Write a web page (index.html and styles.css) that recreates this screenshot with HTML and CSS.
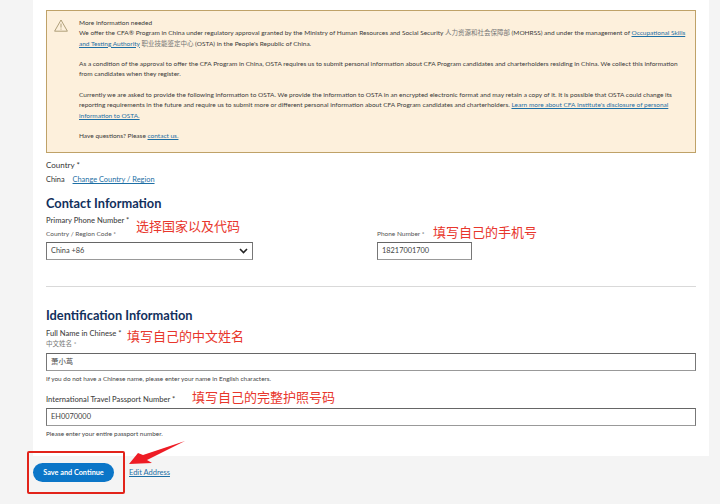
FILE: index.html
```html
<!DOCTYPE html>
<html lang="en">
<head>
  <meta charset="UTF-8">
  <meta name="viewport" content="width=device-width, initial-scale=1.0">
  <title>Contact Information</title>
  <link rel="stylesheet" href="styles.css">
</head>
<body>

  <div class="card">
    <div class="alert">
      <svg class="alert-icon" width="14" height="13" viewBox="0 0 14 13">
        <path d="M7 1 L13.4 12.2 H0.6 Z" fill="none" stroke="#9a8a60" stroke-width="0.8"/>
        <path d="M7 4.6 V8.6 M7 9.6 V10.6" fill="none" stroke="#9a8a60" stroke-width="0.8"/>
      </svg>
      <div class="alert-text">
        <p>More information needed<br>
        We offer the CFA® Program in China under regulatory approval granted by the Ministry of Human Resources and Social Security <span class="cn">人力资源和社会保障部</span> (MOHRSS) and under the management of <a href="#">Occupational Skills<br>and Testing Authority</a> <span class="cn">职业技能鉴定中心</span> (OSTA) in the People's Republic of China.</p>
        <p>As a condition of the approval to offer the CFA Program in China, OSTA requires us to submit personal information about CFA Program candidates and charterholders residing in China. We collect this information<br>from candidates when they register.</p>
        <p>Currently we are asked to provide the following information to OSTA. We provide the information to OSTA in an encrypted electronic format and may retain a copy of it. It is possible that OSTA could change its<br>reporting requirements in the future and require us to submit more or different personal information about CFA Program candidates and charterholders. <a href="#">Learn more about CFA Institute's disclosure of personal<br>information to OSTA.</a></p>
        <p>Have questions? Please <a href="#">contact us.</a></p>
      </div>
    </div>

    <div class="country">
      <div class="country-label">Country *</div>
      <div class="country-value">China <a href="#">Change Country / Region</a></div>
    </div>

    <h2 class="contact-title">Contact Information</h2>
    <div class="group-label">Primary Phone Number *</div>
    <div class="phone-row">
      <div class="code-field">
        <label class="small-label">Country / Region Code *</label>
        <div class="select-box">
          <span>China +86</span>
          <svg width="9" height="6" viewBox="0 0 9 6"><path d="M1 1 L4.5 4.5 L8 1" fill="none" stroke="#222" stroke-width="1.6"/></svg>
        </div>
      </div>
      <div class="phone-field">
        <label class="small-label">Phone Number *</label>
        <div class="text-box">18217001700</div>
      </div>
    </div>

    <hr class="divider">

    <h2 class="id-title">Identification Information</h2>
    <div class="group-label name-label">Full Name in Chinese *</div>
    <label class="small-label cn-label">中文姓名 *</label>
    <div class="text-box">萧小茑</div>
    <div class="hint">If you do not have a Chinese name, please enter your name in English characters.</div>
    <div class="group-label passport-label">International Travel Passport Number *</div>
    <div class="text-box">EH0070000</div>
    <div class="hint">Please enter your entire passport number.</div>
  </div>

  <div class="actions">
    <button class="save-btn">Save and Continue</button>
    <a class="edit-link" href="#">Edit Address</a>
  </div>

  <!-- red notes drawn over the page -->
  <span class="note note-code">选择国家以及代码</span>
  <span class="note note-phone">填写自己的手机号</span>
  <span class="note note-name">填写自己的中文姓名</span>
  <span class="note note-passport">填写自己的完整护照号码</span>
  <div class="red-box"></div>
  <svg class="red-arrow" width="62" height="30" viewBox="0 0 62 30">
    <path d="M60 1 L18 15 L13 13 L4 24 L27 23 L22 20 Z" fill="#ee1c25"/>
  </svg>

</body>
</html>
```

FILE: styles.css
```css
body {
  font-family: 'Lato', 'Noto Sans CJK SC', sans-serif;
  background-color: #f4f4f4;
  color: #333;
  margin: 0;
  height: 504px;
  overflow: hidden;
}

a {
  color: #1d6fa5;
}

.card {
  background-color: white;
  margin: 0 11px 0 33px;
  padding: 10px 13px 0;
  height: 446px;
}

.alert {
  display: flex;
  height: 143px;
  box-sizing: border-box;
  background-color: #fdf0dc;
  border: 1px solid #bfa268;
  padding: 7px 0 0 7px;
}

.alert-icon {
  flex: none;
  margin: 1px 11px 0 0;
}

.alert-text {
  font-size: 6.5px;
  line-height: 10.3px;
  color: #3a3a3a;
}

.alert-text .cn {
  font-size: 6.5px;
  color: #777;
}

.alert-text p {
  margin: 0 0 10.3px;
}

.country {
  margin-top: 7px;
  font-size: 7.4px;
}

.country-label {
  font-size: 8px;
  line-height: 10px;
}

.country-value {
  margin-top: 5px;
  line-height: 10px;
}

.country-value a {
  margin-left: 6px;
}

h2 {
  margin: 0;
  font-size: 12.8px;
  line-height: 16px;
  font-weight: 700;
  color: #12305c;
}

.contact-title {
  margin-top: 10px;
}

.group-label {
  font-size: 7.6px;
  line-height: 10px;
  font-weight: 500;
  color: #444;
  margin-top: 4px;
}

.phone-row {
  display: flex;
  margin-top: 4px;
}

.code-field {
  width: 207px;
  margin-right: 124px;
}

.phone-field {
  width: 95px;
}

.small-label {
  display: block;
  font-size: 6.5px;
  line-height: 9px;
  color: #555;
  margin-bottom: 4px;
}

.select-box, .text-box {
  box-sizing: border-box;
  height: 18px;
  border: 1px solid #777;
  border-top-color: #666;
  border-bottom-color: #999;
  padding: 0 4px;
  font-size: 7.4px;
  line-height: 16px;
  color: #444;
  background-color: white;
}

.select-box {
  display: flex;
  justify-content: space-between;
  align-items: center;
}

.divider {
  border: none;
  border-top: 1px solid #d9d9d9;
  margin: 26px 0 0;
}

.id-title {
  margin-top: 20px;
}

.name-label {
  margin-top: 5px;
}

.cn-label {
  margin: 1px 0 5px;
  color: #777;
}

.hint {
  font-size: 6.4px;
  line-height: 9px;
  color: #444;
  margin-top: 3px;
}

.passport-label {
  margin-top: 11px;
  margin-bottom: 4px;
}

.actions {
  display: flex;
  align-items: center;
  margin: 7px 0 0 33px;
}

.save-btn {
  width: 81px;
  height: 19px;
  border: none;
  border-radius: 10px;
  background-color: #0b76c8;
  color: white;
  font-family: inherit;
  font-size: 7.3px;
  font-weight: 700;
  padding: 0;
}

.edit-link {
  margin-left: 15px;
  font-size: 7.5px;
}

.note {
  position: absolute;
  color: #e8362c;
  font-size: 13px;
  line-height: 14px;
  white-space: nowrap;
}

.note-code { left: 136px; top: 219px; }
.note-phone { left: 433px; top: 225px; }
.note-name { left: 127px; top: 329px; }
.note-passport { left: 192px; top: 390px; }

.red-box {
  position: absolute;
  left: 27px;
  top: 451px;
  width: 94px;
  height: 39px;
  border: 2px solid #e2231a;
  border-radius: 2px;
}

.red-arrow {
  position: absolute;
  left: 125px;
  top: 440px;
}
```
